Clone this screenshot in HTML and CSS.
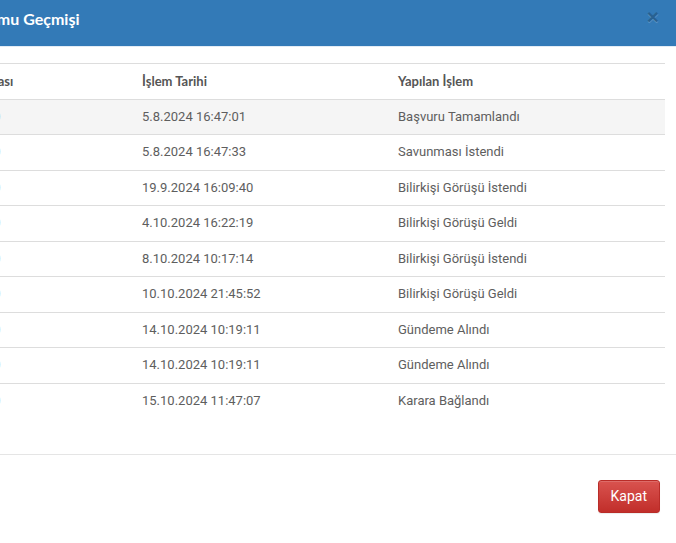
FILE: index.html
```html
<!DOCTYPE html>
<html lang="tr">
<head>
<meta charset="utf-8">
<title>Başvuru Durumu Geçmişi</title>
<link rel="stylesheet" href="styles.css">
</head>
<body>
<div class="modal">
  <div class="modal-header">
    <h4 class="modal-title">Başvuru Durumu Geçmişi</h4>
    <button class="close" type="button" aria-label="Kapat">×</button>
  </div>
  <div class="modal-body">
    <table class="history">
      <colgroup>
        <col class="c1">
        <col class="c2">
        <col class="c3">
      </colgroup>
      <thead>
        <tr><th>Başvuru Numarası</th><th>İşlem Tarihi</th><th>Yapılan İşlem</th></tr>
      </thead>
      <tbody>
        <tr class="active"><td>2024/ÖDK-0120</td><td>5.8.2024 16:47:01</td><td>Başvuru Tamamlandı</td></tr>
        <tr><td>2024/ÖDK-0120</td><td>5.8.2024 16:47:33</td><td>Savunması İstendi</td></tr>
        <tr><td>2024/ÖDK-0120</td><td>19.9.2024 16:09:40</td><td>Bilirkişi Görüşü İstendi</td></tr>
        <tr><td>2024/ÖDK-0120</td><td>4.10.2024 16:22:19</td><td>Bilirkişi Görüşü Geldi</td></tr>
        <tr><td>2024/ÖDK-0120</td><td>8.10.2024 10:17:14</td><td>Bilirkişi Görüşü İstendi</td></tr>
        <tr><td>2024/ÖDK-0120</td><td>10.10.2024 21:45:52</td><td>Bilirkişi Görüşü Geldi</td></tr>
        <tr><td>2024/ÖDK-0120</td><td>14.10.2024 10:19:11</td><td>Gündeme Alındı</td></tr>
        <tr><td>2024/ÖDK-0120</td><td>14.10.2024 10:19:11</td><td>Gündeme Alındı</td></tr>
        <tr><td>2024/ÖDK-0120</td><td>15.10.2024 11:47:07</td><td>Karara Bağlandı</td></tr>
      </tbody>
    </table>
  </div>
  <div class="modal-footer">
    <button class="btn-danger" type="button">Kapat</button>
  </div>
</div>
</body>
</html>
```
FILE: styles.css
```css
html, body {
  margin: 0;
  padding: 0;
  background: #fff;
  overflow: hidden;
}
body {
  width: 676px;
  height: 543px;
}
.modal {
  width: 792px;
  margin-left: -116px;
  background: #fff;
  font-family: "Roboto", "Liberation Sans", sans-serif;
}
.modal-header {
  background: #337ab7;
  height: 46px;
  padding: 0 17px 0 15px;
  display: flex;
  align-items: center;
  justify-content: space-between;
  border-bottom: 1px solid #e3ecf5;
}
.modal-title {
  margin: 0;
  font-family: "Lato", "Open Sans", sans-serif;
  font-weight: 700;
  font-size: 16px;
  line-height: 16px;
  color: #fff;
  position: relative;
  top: -4px;
}
.close {
  border: 0;
  background: transparent;
  padding: 0;
  font-family: "Liberation Sans", sans-serif;
  font-size: 21px;
  font-weight: 700;
  line-height: 1;
  color: #000;
  opacity: .2;
  text-shadow: 0 1px 0 #fff;
  position: relative;
  top: -7px;
}
.modal-body {
  padding: 16px 11px 36px 16px;
}
.history {
  width: 100%;
  border-collapse: collapse;
  table-layout: fixed;
  border-top: 1px solid #ddd;
  font-size: 13px;
  line-height: 18.5px;
}
.c2 { width: 256px; }
.c3 { width: 275px; }
.history th,
.history td {
  padding: 8px;
  text-align: left;
  border-bottom: 1px solid #ddd;
  white-space: nowrap;
  overflow: hidden;
}
.history tbody tr:last-child td {
  border-bottom: 0;
}
.history th {
  font-family: "Lato", "Open Sans", sans-serif;
  font-weight: 700;
  color: #555;
}
.history td {
  color: #5e5e5e;
}
.history tr.active td {
  background: #f5f5f5;
}
.modal-footer {
  border-top: 1px solid #e5e5e5;
  padding: 25px 16px 15px;
  display: flex;
  justify-content: flex-end;
}
.btn-danger {
  font-family: "Roboto", "Liberation Sans", sans-serif;
  font-size: 14px;
  line-height: 19px;
  padding: 6px 12px;
  color: #fff;
  background: linear-gradient(#d9534f, #c12e2a);
  border: 1px solid #b92c28;
  border-radius: 3px;
  box-shadow: inset 0 1px 0 rgba(255,255,255,.15), 0 1px 1px rgba(0,0,0,.075);
}
```
